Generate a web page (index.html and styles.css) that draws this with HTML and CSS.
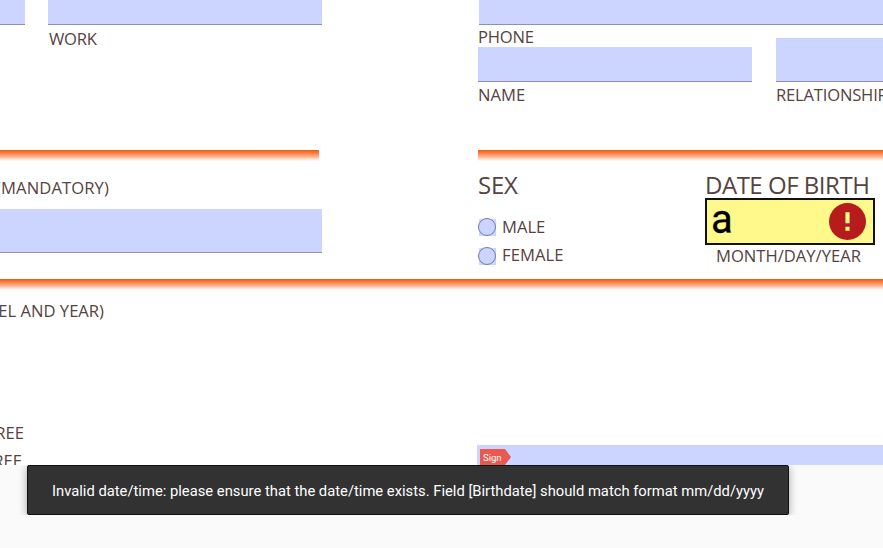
FILE: index.html
```
<!DOCTYPE html>
<html lang="en">
<head>
<meta charset="utf-8">
<title>Form</title>
<link rel="stylesheet" href="styles.css">
</head>
<body>
<main class="page">
  <section class="contact">
    <div class="contact-left">
      <div class="field field-edge"></div>
      <div class="work">
        <div class="field field-top"></div>
        <div class="label label-work">WORK</div>
      </div>
    </div>
    <div class="contact-right">
      <div class="field field-phone"></div>
      <div class="label label-phone">PHONE</div>
      <div class="pair">
        <div class="name">
          <div class="field field-name"></div>
          <div class="label label-name">NAME</div>
        </div>
        <div class="relation">
          <div class="field field-relation"></div>
          <div class="label label-relation">RELATIONSHIP</div>
        </div>
      </div>
    </div>
  </section>
  <section class="personal">
    <div class="mandatory">
      <div class="rule"></div>
      <div class="label label-mandatory">(MANDATORY)</div>
      <div class="field field-mandatory"></div>
    </div>
    <div class="details">
      <div class="rule"></div>
      <div class="details-row">
        <div class="sex">
          <div class="heading heading-sex">SEX</div>
          <div class="option"><span class="radio"></span><span class="label label-male">MALE</span></div>
          <div class="option"><span class="radio"></span><span class="label label-female">FEMALE</span></div>
        </div>
        <div class="birth">
          <div class="heading heading-birth">DATE OF BIRTH</div>
          <div class="birth-field">
            <span class="birth-value">a</span>
            <svg class="error" viewBox="0 0 36 36"><circle cx="18" cy="18" r="18" fill="#b71c1c"/><path d="M16 9h4v10.8h-4zM16 23.2h4v3.8h-4z" fill="#fff98c"/></svg>
          </div>
          <div class="label label-month">MONTH/DAY/YEAR</div>
        </div>
      </div>
    </div>
  </section>
  <section class="more">
    <div class="rule"></div>
    <div class="more-row">
      <div class="more-left">
        <div class="label label-year">EL AND YEAR)</div>
        <div class="label label-degree">REE</div>
        <div class="label label-degree-last">REE</div>
      </div>
      <div class="sign-field">
        <svg class="sign" viewBox="0 0 31 16"><path d="M0 0h25l6 8-6 8H0z" fill="#e8594f"/><text class="sign-text" x="3" y="12">Sign</text></svg>
      </div>
    </div>
  </section>
</main>
<div class="toast-area"><div class="toast">Invalid date/time: please ensure that the date/time exists. Field [Birthdate] should match format mm/dd/yyyy</div></div>
</body>
</html>
```
FILE: styles.css
```
* { box-sizing: border-box; }
body {
  margin: 0;
  width: 883px;
  height: 548px;
  overflow: hidden;
  position: relative;
  background: #fafafa;
  color: #55433f;
  font-family: "Open Sans", "Noto Sans", sans-serif;
}
.page { height: 465px; overflow: hidden; background: #fff; }
.label { font-size: 16.6px; line-height: 20px; height: 20px; white-space: nowrap; }
.heading { font-size: 24px; line-height: 28px; height: 28px; white-space: nowrap; }
.field { background: #ccd5ff; border-bottom: 1px solid #8c8fbd; }
.rule { height: 11px; background: linear-gradient(#f4570c 0, #f77b3c 25%, #fbb48f 60%, #fff 100%); }

.contact { display: grid; grid-template-columns: 478px 405px; height: 150px; }
.contact-left { display: flex; gap: 23px; }
.field-edge { width: 25px; height: 25px; }
.work { width: 274px; }
.field-top { height: 25px; }
.label-work { margin: 4px 0 0 1px; letter-spacing: -.2px; }
.field-phone { height: 25px; margin-left: 1px; }
.label-phone { margin-top: 2px; letter-spacing: -.2px; }
.pair { display: flex; align-items: flex-end; gap: 24px; margin-top: -9px; }
.name { width: 274px; }
.field-name { height: 35px; }
.label-name { margin-top: 3px; }
.relation { width: 107px; overflow: hidden; }
.field-relation { height: 44px; }
.label-relation { margin-top: 3px; letter-spacing: -.2px; }

.personal { display: grid; grid-template-columns: 319px 405px; column-gap: 159px; height: 129px; }
.label-mandatory { width: 109px; margin-top: 17px; display: flex; justify-content: flex-end; letter-spacing: .1px; }
.field-mandatory { width: 322px; height: 44px; margin-top: 11px; }
.details-row { display: flex; }
.sex { width: 227px; padding-top: 10px; }
.heading-sex { margin-bottom: 18px; letter-spacing: -.2px; }
.option { display: flex; gap: 6px; height: 28.5px; align-items: flex-start; position: relative; z-index: 0; }
.label-female { margin-top: -.5px; letter-spacing: .1px; }
.radio { width: 18px; height: 18px; margin-top: 1px; border: 1px solid #777da3; border-radius: 50%; background: #ccd5ff; position: relative; }
.radio::before { content: ""; position: absolute; z-index: -1; inset: 0 -1px -1px 0; background: #ccd5ff; }
.birth { padding-top: 10px; }
.heading-birth { letter-spacing: -.48px; }
.birth-field { display: flex; justify-content: space-between; align-items: flex-start; width: 170px; height: 47px; margin-top: -1px; padding: 3px 7px 0 5px; border: 2px solid #111; background: #fff98c; color: #000; }
.birth-value { margin: -5px 0 0 -1px; font: 40px/44px Roboto, sans-serif; -webkit-text-stroke: .3px #000; }
.error { width: 37px; height: 37px; }
.label-month { margin: 1px 0 0 11px; }

.more-row { display: grid; grid-template-columns: 477px 406px; height: 175px; }
.label-year { margin-top: 11px; width: 104px; display: flex; justify-content: flex-end; }
.label-degree { margin-top: 102px; width: 24px; display: flex; justify-content: flex-end; }
.label-degree-last { margin-top: 8px; width: 22px; display: flex; justify-content: flex-end; }
.sign-field { height: 21px; margin-top: 155px; padding: 4px 0 0 3px; background: #ccd5ff; }
.sign { display: block; width: 31px; height: 16px; }
.sign-text { font: 9.5px Roboto, sans-serif; fill: #fff; }

.toast-area { position: absolute; left: 0; top: 465px; width: 883px; height: 50px; padding-left: 27px; overflow: hidden; }
.toast { width: 762px; height: 50px; padding-left: 24px; border: 1px solid #111; border-radius: 2px; background: #323232; color: #fff; font: 14.78px/51px Roboto, sans-serif; white-space: nowrap; box-shadow: 0 2px 9px rgba(0,0,0,.35); }
```
